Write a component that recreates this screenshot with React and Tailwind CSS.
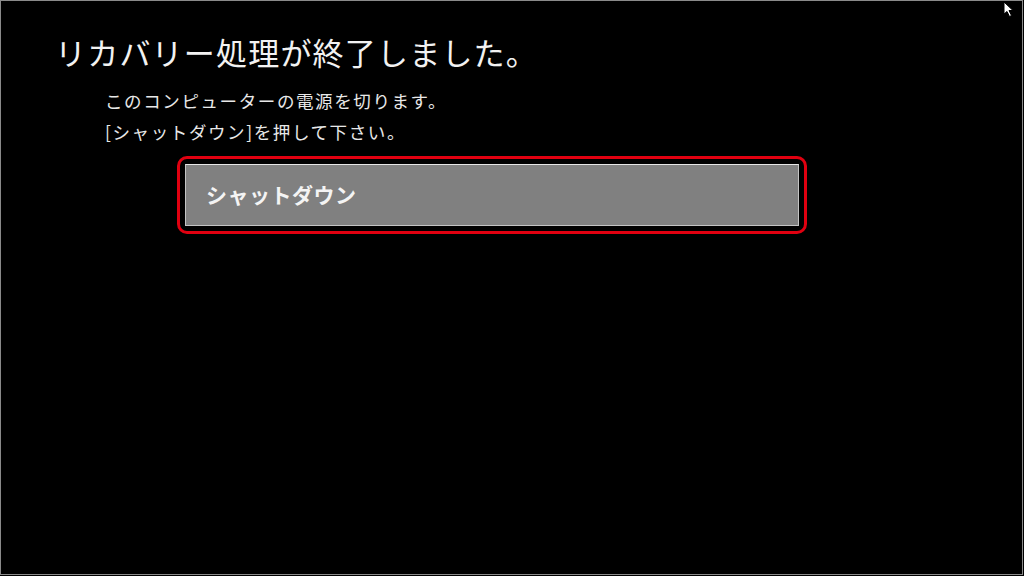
export default function App() {
    const jp = { fontFamily: '"Noto Sans CJK JP", "Noto Sans", sans-serif' };

    return (
        <div className="relative w-[1024px] h-[576px] overflow-hidden bg-black">
            <div className="w-[1023px] h-[575px] border border-[#8a8a8a] bg-black text-white" style={jp}>
                <div className="pt-[32px] pl-[54px]">
                    <h1 className="text-[31px] leading-[38px] font-normal tracking-[1.2px] text-[#f2f2f2]">
                        リカバリー処理が終了しました。
                    </h1>
                    <div className="ml-[50px] mt-[14px] text-[17.5px] leading-[31px] tracking-[1.6px] text-[#e8e8e8]">
                        <p>このコンピューターの電源を切ります。</p>
                        <p>[シャットダウン]を押して下さい。</p>
                    </div>
                    <div className="ml-[122px] mt-[9px] w-[630px] rounded-[10px] border-[3px] border-[#e00010] p-[5px]">
                        <button className="flex items-center w-full h-[62px] bg-[#808080] border border-[#c4c4c4] border-t-[#e6e6e6] pl-[20px] text-left text-[21px] font-semibold tracking-[0.5px] text-[#f4f4f4]">
                            シャットダウン
                        </button>
                    </div>
                </div>
            </div>

            {/* mouse pointer */}
            <svg className="absolute left-[1003px] top-[1px]" width="11" height="17" viewBox="0 0 11 17">
                <path d="M1 1 L1 13 L4 10.5 L6.5 15.5 L8.5 14.5 L6 9.5 L10 9.5 Z" fill="#fff" stroke="#000" strokeWidth="1" />
            </svg>
        </div>
    );
}
